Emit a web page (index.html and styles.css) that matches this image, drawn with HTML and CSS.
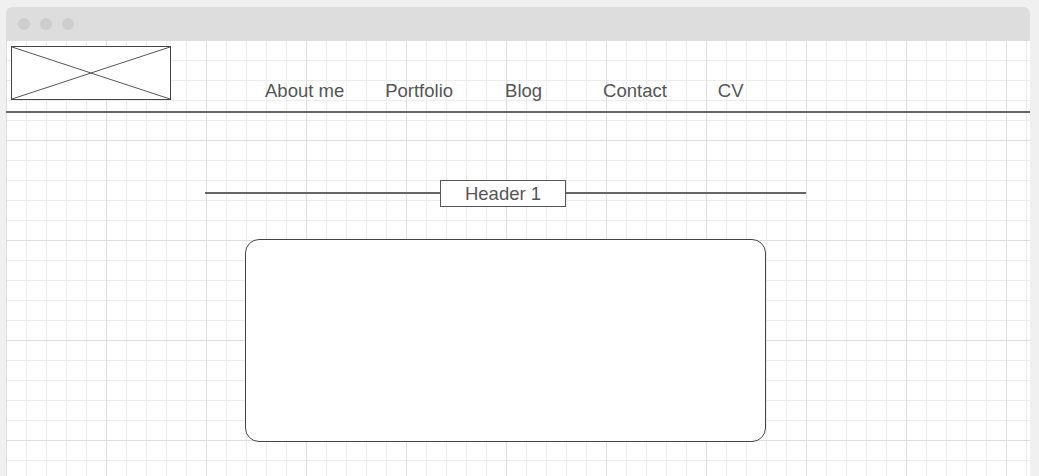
FILE: index.html
```html
<!DOCTYPE html>
<html>
<head>
<meta charset="utf-8">
<link rel="stylesheet" href="styles.css">
</head>
<body>
<div class="window">
  <div class="titlebar">
    <span class="dot"></span><span class="dot"></span><span class="dot"></span>
  </div>
  <div class="content">
    <div class="topbar">
      <div class="logo">
        <svg width="160" height="54" viewBox="0 0 160 54">
          <rect x="0.5" y="0.5" width="159" height="53" fill="#fff" stroke="#444"/>
          <line x1="1" y1="1" x2="159" y2="53" stroke="#555"/>
          <line x1="1" y1="53" x2="159" y2="1" stroke="#555"/>
        </svg>
      </div>
      <nav class="nav">
        <span class="nav-item about">About me</span>
        <span class="nav-item portfolio">Portfolio</span>
        <span class="nav-item blog">Blog</span>
        <span class="nav-item contact">Contact</span>
        <span class="nav-item cv">CV</span>
      </nav>
    </div>
    <div class="heading-row">
      <div class="rule rule-left"></div>
      <div class="heading">Header 1</div>
      <div class="rule rule-right"></div>
    </div>
    <div class="card"></div>
  </div>
</div>
</body>
</html>
```

FILE: styles.css
```css
html, body {
  margin: 0;
  padding: 0;
  height: 100%;
  overflow: hidden;
}
body {
  background: #f0f0f0;
  padding: 7px 0 0 6px;
  box-sizing: border-box;
  font-family: "Liberation Sans", Arial, sans-serif;
}
.window {
  width: 1024px;
  border-radius: 6px 6px 0 0;
  overflow: hidden;
  background: #fff;
}
.titlebar {
  height: 33px;
  background: #dddddd;
  display: flex;
  align-items: center;
  gap: 10px;
  padding-left: 12px;
}
.dot {
  width: 12px;
  height: 12px;
  border-radius: 50%;
  background: #cdcdcd;
}
.content {
  height: 436px;
  background-color: #fff;
  background-image:
    linear-gradient(to right, #dedede 1px, transparent 1px),
    linear-gradient(to bottom, #dedede 1px, transparent 1px),
    linear-gradient(to right, #ececec 1px, transparent 1px),
    linear-gradient(to bottom, #ececec 1px, transparent 1px);
  background-size: 100px 100px, 100px 100px, 20px 20px, 20px 20px;
  background-position: 0 0, 0 0, 0 0, 0 0;
}
.topbar {
  height: 71px;
  border-bottom: 2px solid #666;
  display: flex;
  align-items: flex-start;
}
.logo {
  margin: 6px 0 0 5px;
  height: 54px;
}
.logo svg {
  display: block;
}
.nav {
  display: flex;
  margin-left: 94px;
  margin-top: 40px;
  font-size: 18.5px;
  color: #555;
}
.nav-item {
  white-space: nowrap;
}
.portfolio { margin-left: 41px; }
.blog { margin-left: 52px; }
.contact { margin-left: 61px; }
.cv { margin-left: 51px; }
.heading-row {
  display: flex;
  align-items: flex-start;
  margin: 67px 0 0 199px;
  width: 601px;
}
.rule {
  height: 2px;
  margin-top: 12px;
  background: #666;
}
.rule-left {
  width: 235px;
}
.rule-right {
  flex: 1;
}
.heading {
  width: 124px;
  height: 25px;
  border: 1px solid #555;
  background: #fff;
  color: #555;
  font-size: 18.5px;
  line-height: 25px;
  text-align: center;
}
.card {
  margin: 32px 0 0 239px;
  width: 519px;
  height: 201px;
  border: 1px solid #444;
  border-radius: 14px;
  background: #fff;
}
```
